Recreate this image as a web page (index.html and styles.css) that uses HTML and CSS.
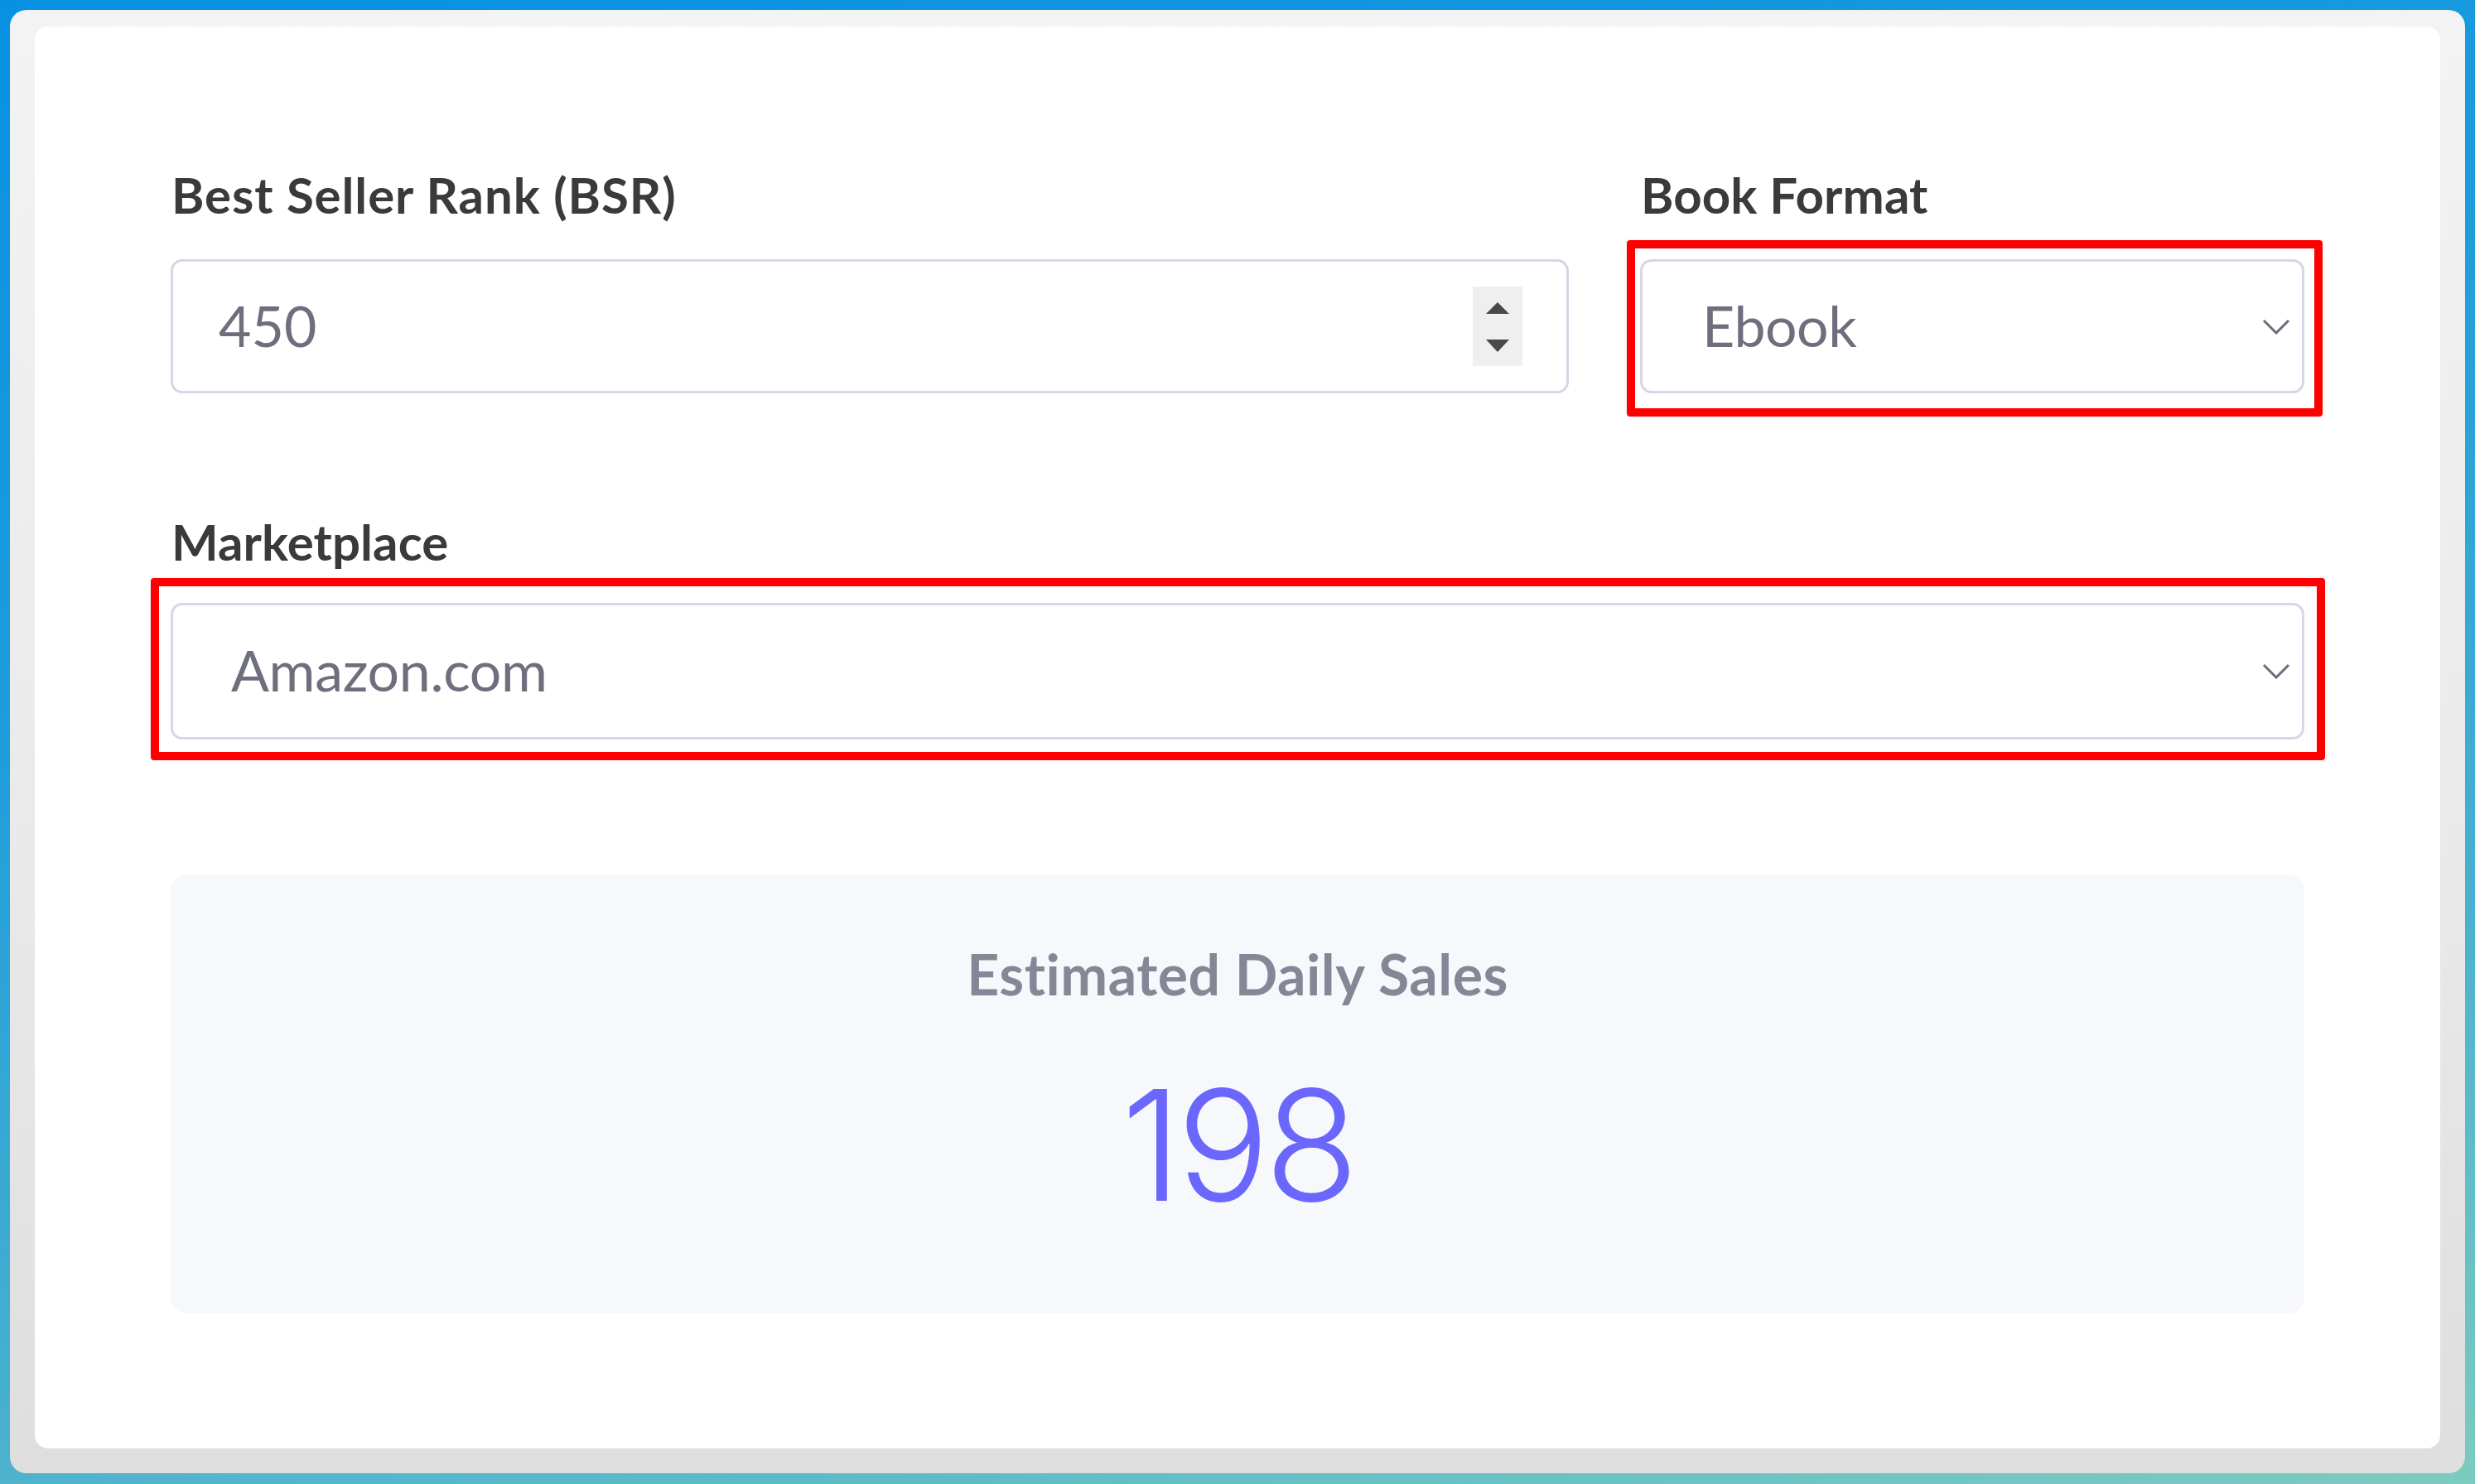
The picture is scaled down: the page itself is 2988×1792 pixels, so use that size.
FILE: index.html
```html
<!DOCTYPE html>
<html lang="en">
<head>
<meta charset="utf-8">
<title>BSR Sales Calculator</title>
<link rel="stylesheet" href="styles.css">
</head>
<body>
<div class="frame">
  <div class="card">
    <div class="row row-top">
      <div class="field">
        <label class="label label-bsr">Best Seller Rank (BSR)</label>
        <div class="control control-number">
          <span class="value value-num">450</span>
          <span class="spinner">
            <span class="tri tri-up"></span>
            <span class="tri tri-down"></span>
          </span>
        </div>
      </div>
      <div class="field">
        <label class="label">Book Format</label>
        <div class="control control-select control-format">
          <span class="value value-format">Ebook</span>
          <svg class="chevron" viewBox="0 0 34 19" width="34" height="19"><path d="M2 2 L17 17 L32 2" fill="none" stroke="#6b6c7b" stroke-width="3"/></svg>
          <span class="highlight highlight-format"></span>
        </div>
      </div>
    </div>
    <div class="row row-market">
      <div class="field">
        <label class="label">Marketplace</label>
        <div class="control control-select control-market">
          <span class="value value-market">Amazon.com</span>
          <svg class="chevron" viewBox="0 0 34 19" width="34" height="19"><path d="M2 2 L17 17 L32 2" fill="none" stroke="#6b6c7b" stroke-width="3"/></svg>
          <span class="highlight highlight-market"></span>
        </div>
      </div>
    </div>
    <div class="result">
      <div class="result-title">Estimated Daily Sales</div>
      <div class="result-value">198</div>
    </div>
  </div>
</div>
</body>
</html>
```

FILE: styles.css
```css
* { box-sizing: border-box; }
html, body { margin: 0; padding: 0; }
body {
  width: 2988px;
  height: 1792px;
  overflow: hidden;
  background: linear-gradient(168deg, #0891e3 0%, #1c9cdc 35%, #47b0cf 70%, #7ccbbf 100%);
  font-family: "Lato", "Open Sans", sans-serif;
  padding: 12px 12px 13px 12px;
}
.frame {
  width: 2964px;
  height: 1767px;
  border-radius: 20px;
  background: linear-gradient(180deg, #f3f3f3 0%, #e9e9e9 60%, #dedede 100%);
  padding: 20px 30px 30px 30px;
}
.card {
  width: 2904px;
  height: 1717px;
  background: #ffffff;
  border-radius: 16px;
  padding: 167px 164px 0 164px;
  display: flex;
  flex-direction: column;
}
.row-top {
  display: grid;
  grid-template-columns: 1688px 802px;
  column-gap: 86px;
}
.row-market {
  margin-top: 143px;
}
.field {
  display: flex;
  flex-direction: column;
}
.label {
  display: block;
  font-size: 60px;
  line-height: 72px;
  font-weight: 700;
  color: #3a3a3a;
  letter-spacing: 0.1px;
  margin-bottom: 42px;
  padding-left: 1px;
}
.label-bsr { letter-spacing: 0.9px; }
.row-market .label { margin-bottom: 38px; }
.control {
  position: relative;
  height: 162px;
  border: 3px solid #d5d7e6;
  border-radius: 14px;
  background: #fff;
  display: flex;
  align-items: center;
  justify-content: space-between;
}
.control-market { height: 165px; }
.value {
  font-size: 68px;
  color: #6e6f7e;
  font-weight: 400;
  position: relative;
  top: -2px;
}
.value-num { padding-left: 55px; }
.value-format { padding-left: 72px; letter-spacing: -0.5px; }
.value-market { padding-left: 70px; letter-spacing: -0.3px; }
.control-number { padding-right: 53px; }
.control-select { padding-right: 14px; }
.spinner {
  width: 60px;
  height: 96px;
  background: #efefef;
  display: flex;
  flex-direction: column;
  align-items: center;
  padding-top: 19px;
  gap: 31px;
}
.tri {
  width: 0;
  height: 0;
  border-left: 14px solid transparent;
  border-right: 14px solid transparent;
}
.tri-up { border-bottom: 14px solid #494949; }
.tri-down { border-top: 15px solid #494949; }
.chevron { display: block; }
.highlight {
  position: absolute;
  border: 10px solid #fe0000;
  border-radius: 4px;
  box-shadow: 0 0 4px rgba(0,0,0,0.08);
  pointer-events: none;
}
.highlight-format { left: -19px; right: -25px; top: -26px; bottom: -31px; }
.highlight-market { left: -27px; right: -28px; top: -33px; bottom: -28px; }
.result {
  margin-top: 163px;
  height: 530px;
  background: #f7f8fc;
  border-radius: 20px;
  text-align: center;
  padding-top: 79px;
}
.result-title {
  font-size: 68px;
  line-height: 82px;
  font-weight: 700;
  color: #868796;
  letter-spacing: 0.5px;
}
.result-value {
  margin-top: 72px;
  font-family: "Inter", "Open Sans", sans-serif;
  font-size: 186px;
  line-height: 188px;
  font-weight: 300;
  letter-spacing: -6px;
  color: #6b66fc;
}
```
